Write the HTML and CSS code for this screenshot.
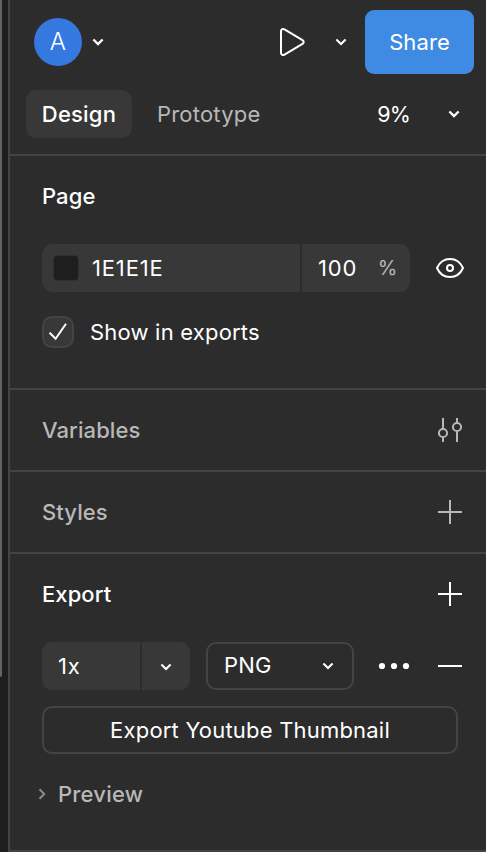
FILE: index.html
```html
<!DOCTYPE html>
<html lang="en">
<head>
<meta charset="utf-8">
<title>Design panel</title>
<link rel="stylesheet" href="styles.css">
</head>
<body>
<div class="app">
  <div class="canvas"><div class="scrollbar"></div></div>
  <aside class="panel">
    <header class="topbar">
      <div class="avatar">A</div>
      <svg class="chevron user-chevron" viewBox="0 0 12 8"><path d="M1.400 1.500 6 6l4.600-4.500"/></svg>
      <svg class="play" viewBox="0 0 28 32"><path d="M2 5.300v21.400c0 2 1.800 2.900 3.500 1.900l18-10.700c1.600-1 1.600-2.800 0-3.800l-18-10.700C3.800 2.400 2 3.300 2 5.300z"/></svg>
      <svg class="chevron play-chevron thin" viewBox="0 0 12 8"><path d="M1.400 1.500 6 6l4.600-4.500"/></svg>
      <button class="share">Share</button>
    </header>
    <nav class="tabs">
      <div class="tab active">Design</div>
      <div class="tab prototype">Prototype</div>
      <div class="zoom">9%</div>
      <svg class="chevron" viewBox="0 0 12 8"><path d="M1.400 1.500 6 6l4.600-4.500"/></svg>
    </nav>
    <section class="section page">
      <div class="heading"><h2>Page</h2></div>
      <div class="fill-row">
        <div class="field">
          <div class="color"><span class="swatch"></span><span class="hex">1E1E1E</span></div>
          <div class="opacity"><span>100</span><span class="unit">%</span></div>
        </div>
        <svg class="eye" viewBox="0 0 28 20"><path d="M1 10C3.500 4.400 8.300 1 14 1s10.500 3.400 13 9c-2.500 5.600-7.300 9-13 9S3.500 15.600 1 10z"/><circle cx="14" cy="10" r="3"/></svg>
      </div>
      <label class="check-row">
        <span class="checkbox"><svg viewBox="0 0 18 18"><path d="M.6 9.800 6.600 15.800 17 .8"/></svg></span>
        <span>Show in exports</span>
      </label>
    </section>
    <section class="section muted">
      <div class="heading"><h2>Variables</h2>
        <svg class="icon" viewBox="0 0 24 24"><path d="M5 0v10.800M5 19.200V24M19 0v4.800M19 13.200V24"/><circle cx="5" cy="15" r="4.100"/><circle cx="19" cy="9" r="4.100"/></svg>
      </div>
    </section>
    <section class="section muted">
      <div class="heading"><h2>Styles</h2>
        <svg class="icon" viewBox="0 0 24 24"><path d="M0 12h24M12 0v24"/></svg>
      </div>
    </section>
    <section class="section export">
      <div class="heading"><h2>Export</h2>
        <svg class="icon" viewBox="0 0 24 24"><path d="M0 12h24M12 0v24"/></svg>
      </div>
      <div class="export-row">
        <div class="scale">
          <div class="scale-value">1x</div>
          <div class="scale-menu"><svg class="chevron thin" viewBox="0 0 12 8"><path d="M1.400 1.500 6 6l4.600-4.500"/></svg></div>
        </div>
        <div class="format"><span>PNG</span><svg class="chevron thin" viewBox="0 0 12 8"><path d="M1.400 1.500 6 6l4.600-4.500"/></svg></div>
        <svg class="more" viewBox="0 0 30 6"><circle cx="3" cy="3" r="3.100"/><circle cx="15" cy="3" r="3.100"/><circle cx="27" cy="3" r="3.100"/></svg>
        <svg class="icon minus" viewBox="0 0 24 24"><path d="M0 12h24"/></svg>
      </div>
      <button class="export-button">Export Youtube Thumbnail</button>
      <div class="preview">
        <svg class="caret" viewBox="0 0 8 12"><path d="M1.500 1.300 6.200 6l-4.700 4.700"/></svg>
        <span>Preview</span>
      </div>
    </section>
  </aside>
</div>
</body>
</html>
```

FILE: styles.css
```css
* { box-sizing: border-box; }

body {
  margin: 0;
  background: #1e1e1e;
  color: #fff;
  font: 400 22px/32px Inter, sans-serif;
  letter-spacing: 0.2px;
}

svg { display: block; flex: none; fill: none; stroke: currentColor; stroke-width: 2; overflow: visible; }
button { font: inherit; letter-spacing: inherit; color: inherit; padding: 0; }
h2 { margin: 0; font: inherit; font-weight: 550; letter-spacing: 0.08px; }

.app { display: flex; width: 486px; height: 852px; overflow: hidden; }
.canvas { width: 8px; background: #1e1e1e; }
.scrollbar { width: 2px; height: 677px; background: #646464; border-radius: 0 2px 3px 0; }

.panel {
  display: flex;
  flex-direction: column;
  flex: 1;
  background: #2c2c2c;
  border-left: 2px solid #444;
  border-bottom: 2px solid #444;
}

.chevron { width: 12px; height: 8px; stroke-width: 2.4; }
.chevron.thin { stroke-width: 2; }

.topbar { display: flex; align-items: center; height: 84px; padding: 0 12px 0 24px; }
.avatar {
  width: 48px;
  height: 48px;
  border-radius: 50%;
  background: #3578df;
  line-height: 48px;
  text-align: center;
  font-size: 24px;
  font-weight: 350;
}
.user-chevron { margin-left: 10px; }
.play { width: 28px; height: 32px; margin: 0 28px 0 auto; }
.play-chevron { margin-right: 18px; }
.share { width: 109px; height: 64px; border: 0; border-radius: 9px; background: #3f8ae2; letter-spacing: 0.1px; }

.tabs {
  display: flex;
  align-items: center;
  height: 72px;
  padding: 0 26px 10px 16px;
  border-bottom: 2px solid #444;
}
.tab { height: 48px; line-height: 48px; }
.tab.active { width: 106px; border-radius: 10px; background: #383838; text-align: center; font-weight: 550; }
.prototype { margin-left: 25px; color: #b8b8b8; }
.zoom { margin: 0 38px 0 auto; font-size: 21.5px; letter-spacing: -0.9px; }

.section { flex: none; border-bottom: 2px solid #444; padding: 0 24px 0 32px; }
.section:last-child { border: 0; }
.heading { display: flex; align-items: center; justify-content: space-between; height: 80px; }
.muted { color: #b8b8b8; }
.icon { width: 24px; height: 24px; }

.page { height: 234px; }
.fill-row { display: flex; align-items: center; justify-content: space-between; margin: 8px -2px 0 0; }
.field { display: flex; width: 368px; height: 48px; border-radius: 10px; background: #383838; }
.color { display: flex; align-items: center; gap: 13px; width: 260px; padding-left: 11px; border-right: 2px solid #2c2c2c; }
.swatch { width: 26px; height: 26px; border: 1px solid #303030; border-radius: 4px; background: #1e1e1e; }
.hex { letter-spacing: 0.85px; }
.opacity { display: flex; align-items: center; justify-content: space-between; flex: 1; padding: 0 13px 0 16px; letter-spacing: 0.8px; }
.unit { color: #b8b8b8; font-size: 20px; letter-spacing: -0.5px; }
.eye { width: 28px; height: 20px; }
.check-row { display: flex; align-items: center; gap: 16px; margin-top: 24px; }
.checkbox {
  display: grid;
  place-items: center;
  width: 32px;
  height: 32px;
  border: 2px solid #444;
  border-radius: 10px;
  background: #383838;
}
.checkbox svg { width: 18px; height: 18px; }

.export-row { display: flex; align-items: center; height: 48px; margin-top: 8px; }
.scale { display: flex; width: 148px; height: 48px; border-radius: 10px; background: #383838; }
.scale-value { width: 100px; padding-left: 16px; line-height: 48px; letter-spacing: 0.9px; border-right: 2px solid #2c2c2c; }
.scale-menu { display: grid; place-items: center; flex: 1; padding-top: 2px; }
.format {
  display: flex;
  align-items: center;
  justify-content: space-between;
  width: 148px;
  height: 48px;
  margin-left: 16px;
  padding: 0 18px 0 16px;
  border: 2px solid #444;
  border-radius: 10px;
}
.format span { margin-top: -2px; }
.more { width: 30px; height: 6px; margin-left: 25px; fill: currentColor; stroke: none; }
.minus { margin-left: auto; }
.export-button {
  display: block;
  width: 416px;
  height: 48px;
  margin-top: 16px;
  border: 2px solid #444;
  border-radius: 10px;
  background: none;
}
.preview { display: flex; align-items: center; gap: 12px; margin: 24px 0 0 -4px; color: #b8b8b8; font-weight: 500; }
.caret { width: 8px; height: 12px; color: #8c8c8c; }
```
